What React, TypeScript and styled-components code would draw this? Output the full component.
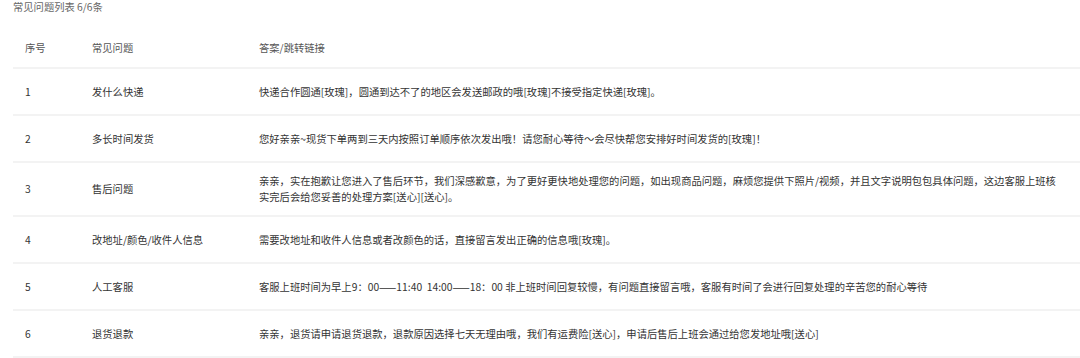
import React from "react";
import styled, { createGlobalStyle } from "styled-components";

const GlobalStyle = createGlobalStyle`
  html, body {
    margin: 0;
    padding: 0;
    background: #ffffff;
  }
  body {
    font-family: "Noto Sans CJK SC", "Noto Sans", "Liberation Sans", sans-serif;
    -webkit-font-smoothing: antialiased;
  }
`;

const Page = styled.div`
  width: 1080px;
  height: 358px;
  overflow: hidden;
  padding-left: 13px;
  box-sizing: border-box;
`;

const Title = styled.div`
  font-size: 10.3px;
  line-height: 14px;
  color: #666666;
  height: 14px;
`;

const Table = styled.div`
  margin-top: 14px;
  display: flex;
  flex-direction: column;
`;

const Row = styled.div<{ $header?: boolean }>`
  display: grid;
  grid-template-columns: 67px 167px 1fr;
  min-height: ${(p) => (p.$header ? "39px" : "45px")};
  border-bottom: 2px solid #f3f3f3;
  color: ${(p) => (p.$header ? "#555555" : "#333333")};
`;

const Cell = styled.div`
  display: flex;
  align-items: center;
  padding: 10px 20px 10px 12px;
  font-size: 10.3px;
  line-height: 16px;
  white-space: pre-wrap;
`;

const rows: [string, string, string][] = [
  ["1", "发什么快递", "快递合作圆通[玫瑰]，圆通到达不了的地区会发送邮政的哦[玫瑰]不接受指定快递[玫瑰]。"],
  ["2", "多长时间发货", "您好亲亲~现货下单两到三天内按照订单顺序依次发出哦！请您耐心等待～会尽快帮您安排好时间发货的[玫瑰]！"],
  [
    "3",
    "售后问题",
    "亲亲，实在抱歉让您进入了售后环节，我们深感歉意，为了更好更快地处理您的问题，如出现商品问题，麻烦您提供下照片/视频，并且文字说明包包具体问题，这边客服上班核实完后会给您妥善的处理方案[送心][送心]。",
  ],
  ["4", "改地址/颜色/收件人信息", "需要改地址和收件人信息或者改颜色的话，直接留言发出正确的信息哦[玫瑰]。"],
  [
    "5",
    "人工客服",
    "客服上班时间为早上9：00——11:40  14:00——18：00 非上班时间回复较慢，有问题直接留言哦，客服有时间了会进行回复处理的辛苦您的耐心等待",
  ],
  ["6", "退货退款", "亲亲，退货请申请退货退款，退款原因选择七天无理由哦，我们有运费险[送心]，申请后售后上班会通过给您发地址哦[送心]"],
];

export default function App() {
  return (
    <>
      <GlobalStyle />
      <Page>
        <Title>常见问题列表 6/6条</Title>
        <Table>
          <Row $header>
            <Cell>序号</Cell>
            <Cell>常见问题</Cell>
            <Cell>答案/跳转链接</Cell>
          </Row>
          {rows.map(([n, q, a]) => (
            <Row key={n}>
              <Cell>{n}</Cell>
              <Cell>{q}</Cell>
              <Cell>{a}</Cell>
            </Row>
          ))}
        </Table>
      </Page>
    </>
  );
}
